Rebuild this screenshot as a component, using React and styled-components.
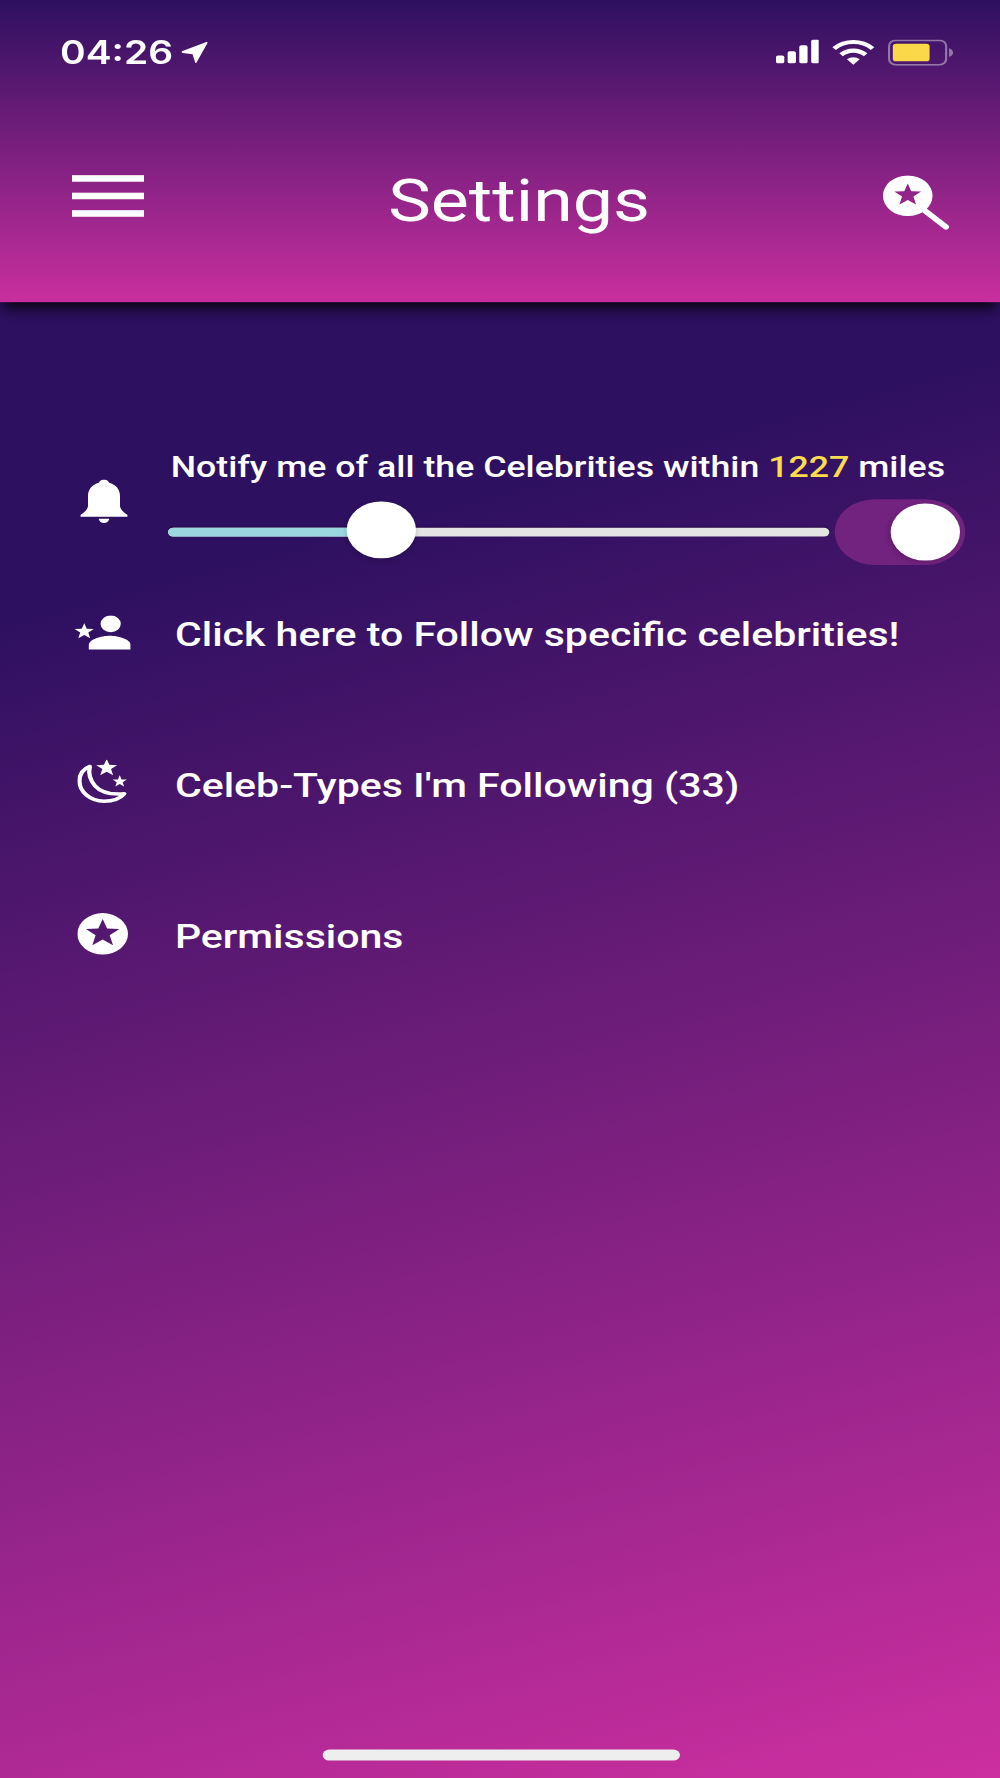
import React from "react";
import styled, { createGlobalStyle } from "styled-components";

const Global = createGlobalStyle`
  html, body { margin: 0; padding: 0; width: 1000px; height: 1778px; overflow: hidden; background: #2d1060; }
  #root { width: 1000px; height: 1778px; overflow: hidden; }
`;

/* The app is a 375x812 layout, stretched non-uniformly to the 1000x1778 picture. */
const Stage = styled.div`
  width: 375px;
  height: 812px;
  transform: scale(2.66667, 2.18966);
  transform-origin: 0 0;
  display: flex;
  flex-direction: column;
  font-family: Roboto, "Liberation Sans", sans-serif;
  color: #fff;
  background: linear-gradient(162deg, #2d1060 30%, #cd2fa0 100%);
  filter: blur(0.2px);
`;

const Header = styled.header`
  height: 138px;
  flex: none;
  box-sizing: border-box;
  display: flex;
  flex-direction: column;
  background: linear-gradient(180deg, #2d1060 0%, #c92f9e 100%);
  box-shadow: 0 3px 6px -1px rgba(0, 0, 0, 0.95);
  position: relative;
  z-index: 1;
`;

const StatusBar = styled.div`
  height: 44px;
  flex: none;
  box-sizing: border-box;
  padding: 16.5px 17.5px 0 22.5px;
  display: flex;
  align-items: flex-start;
  justify-content: space-between;
`;

const Clock = styled.div`
  display: flex;
  align-items: center;
  gap: 3.5px;
  font-family: Inter, "Liberation Sans", sans-serif;
  font-size: 14.6px;
  font-weight: 600;
  line-height: 15px;
  letter-spacing: 0;
`;

const StatusIcons = styled.div`
  display: flex;
  align-items: center;
  gap: 5px;
  padding-top: 1px;
`;

const NavBar = styled.div`
  flex: 1;
  display: flex;
  align-items: flex-start;
  padding: 36px 19px 0 26.8px;
  position: relative;
`;

const Burger = styled.div`
  width: 27.2px;
  height: 18.5px;
  display: flex;
  flex-direction: column;
  justify-content: space-between;
`;

const BurgerLine = styled.span`
  display: block;
  height: 3px;
  background: #fff;
`;

const Title = styled.h1`
  margin: -4.5px 0 0 91.6px;
  font-size: 26.9px;
  line-height: 33px;
  font-weight: 400;
  flex: 1;
  letter-spacing: 0;
`;

const Main = styled.main`
  flex: 1;
  padding-top: 68.2px;
  display: flex;
  flex-direction: column;
`;

const NotifyRow = styled.section`
  display: flex;
  align-items: center;
  padding-left: 27px;
  margin-bottom: 6px;
`;

const IconCell = styled.div`
  width: 24px;
  flex: none;
  display: flex;
  justify-content: center;
  align-items: center;
  margin-bottom: ${(p) => p.$lift || 0}px;
`;

const NotifyBody = styled.div`
  margin-left: 12px;
  display: flex;
  flex-direction: column;
  gap: 6px;
`;

const NotifyLabel = styled.div`
  padding-left: 1px;
  font-size: 13.4px;
  line-height: 16px;
  font-weight: 500;
  white-space: nowrap;
`;

const Miles = styled.span`
  color: #fbdc4c;
`;

const Controls = styled.div`
  display: flex;
  align-items: center;
  gap: 2.8px;
`;

const Slider = styled.div`
  position: relative;
  width: 247.5px;
  height: 4px;
  border-radius: 2px;
  background: #e4e4e4;
  box-shadow: 0 -0.5px 0.5px rgba(30, 0, 60, 0.5);
`;

const SliderFill = styled.div`
  height: 100%;
  border-radius: 2px 0 0 2px;
  background: #9cd6df;
`;

const SliderThumb = styled.div`
  position: absolute;
  top: calc(50% - 1.2px);
  width: 26px;
  height: 26px;
  border-radius: 50%;
  background: #fff;
  transform: translate(-50%, -50%);
  box-shadow: 0 1px 2px rgba(0, 0, 0, 0.18);
`;

const Switch = styled.div`
  width: 49px;
  height: 30px;
  box-sizing: border-box;
  padding: 2px;
  border-radius: 15px;
  background: #72227f;
  display: flex;
  justify-content: flex-end;
`;

const SwitchThumb = styled.div`
  width: 26px;
  height: 26px;
  border-radius: 50%;
  background: #fff;
  box-shadow: -1px 1px 2px rgba(0, 0, 0, 0.15);
`;

const Rows = styled.div`
  display: flex;
  flex-direction: column;
  gap: 18.7px;
`;

const Row = styled.div`
  height: 50px;
  display: flex;
  align-items: center;
  gap: 15.2px;
  padding-left: 26.4px;
`;

const RowText = styled.span`
  padding-top: 2px;
  font-size: 15.4px;
  line-height: 20px;
  font-weight: 500;
  white-space: nowrap;
`;

const HomeBar = styled.div`
  flex: none;
  padding-bottom: 7.7px;
  display: flex;
  justify-content: center;
`;

const HomeIndicator = styled.div`
  width: 134px;
  height: 5px;
  border-radius: 3px;
  background: #eeeeee;
`;

const star = (cx, cy, r, inner = 0.42) => {
  let d = "";
  for (let i = 0; i < 10; i++) {
    const rad = i % 2 ? r * inner : r;
    const a = -Math.PI / 2 + (i * Math.PI) / 5;
    d += `${i ? "L" : "M"}${(cx + rad * Math.cos(a)).toFixed(2)} ${(cy + rad * Math.sin(a)).toFixed(2)}`;
  }
  return d + "Z";
};

const circle = (cx, cy, r) =>
  `M${cx - r} ${cy}A${r} ${r} 0 1 1 ${cx + r} ${cy}A${r} ${r} 0 1 1 ${cx - r} ${cy}Z`;

const Arrow = () => (
  <svg width="10" height="10" viewBox="0 0 10 10">
    <path d="M.2 4.4 9.4.2c.3-.1.5.1.4.4L5.7 9.6c-.1.3-.5.2-.5-.1L4.2 5.8.5 5.2C.1 5.1 0 4.6.2 4.4Z" fill="#fff" />
  </svg>
);

const Signal = () => (
  <svg width="16.5" height="11" viewBox="0 0 17 11" preserveAspectRatio="none" fill="#fff">
    <rect x="0" y="7.4" width="3.2" height="3.6" rx=".8" />
    <rect x="4.5" y="5.4" width="3.2" height="5.6" rx=".8" />
    <rect x="9" y="2.7" width="3.2" height="8.3" rx=".8" />
    <rect x="13.6" y="0" width="3.2" height="11" rx=".8" />
  </svg>
);

const Wifi = () => (
  <svg width="16" height="12" viewBox="0 0 16 12" fill="none" stroke="#fff" strokeWidth="1.9">
    <path d="M.8 4.2C4.8.2 11.2.2 15.2 4.2" />
    <path d="M3.4 7C6 4.5 10 4.5 12.6 7" />
    <path d="M5.6 9.1 8 11.6l2.4-2.5C9 7.8 7 7.8 5.6 9.1Z" fill="#fff" stroke="none" />
  </svg>
);

const Battery = () => (
  <svg width="24.5" height="12" viewBox="0 0 24.5 12">
    <rect x=".4" y=".4" width="21.4" height="11.2" rx="2.6" fill="none" stroke="#fff" strokeOpacity=".42" strokeWidth=".8" />
    <rect x="1.8" y="2" width="13.8" height="8" rx="1.2" fill="#fbd84a" />
    <path d="M22.9 4v4c.9-.3 1.5-1.1 1.5-2s-.6-1.7-1.5-2Z" fill="#fff" fillOpacity=".42" />
  </svg>
);

const SearchStar = () => (
  <svg width="25" height="25" viewBox="0 0 25 25">
    <path d={circle(9.4, 9.4, 9.3) + star(9.4, 9.1, 5.3)} fill="#fff" fillRule="evenodd" />
    <path d="M15.8 16.2 23.7 23.6" stroke="#fff" strokeWidth="2.4" strokeLinecap="round" fill="none" />
  </svg>
);

const Bell = () => (
  <svg width="18" height="20" viewBox="0 0 18 20" fill="#fff">
    <path d="M9 0c1 0 1.7.6 1.9 1.5C13.5 2.3 15 4.6 15 7.5V12c0 1.3.8 2.4 2.8 4.2V17H.2v-.8C2.2 14.4 3 13.3 3 12V7.5C3 4.6 4.5 2.3 7.1 1.5 7.3.6 8 0 9 0Z" />
    <path d="M7 17.9h4c-.2 1.2-1 2-2 2s-1.8-.8-2-2Z" />
  </svg>
);

const PersonStar = () => (
  <svg width="21" height="16" viewBox="0 0 21 16" fill="#fff">
    <circle cx="13.5" cy="3.9" r="3.8" />
    <path d="M5.3 15.6V13.6C5.3 10.9 10 9.3 13.2 9.3S21 10.9 21 13.6V15.6Z" />
    <path d={star(3.6, 7.4, 3.8)} />
  </svg>
);

const MoonStars = () => (
  <svg width="18.5" height="20" viewBox="0 0 18.5 20" fill="#fff">
    <path
      d="M4.7 3C1.9 4.3.8 7 .8 9.7.8 14.5 4.7 18.9 10 18.9c3.4 0 6-1.1 7.6-3.4-5.2.5-8.8-.6-11-3.7C4.8 9.3 4.1 6.2 4.7 3Z"
      fill="none"
      stroke="#fff"
      strokeWidth="1.6"
      strokeLinejoin="round"
    />
    <path d={star(11, 3.7, 4.1)} />
    <path d={star(15.9, 9.9, 2.8)} />
  </svg>
);

const StarBadge = () => (
  <svg width="19" height="19" viewBox="0 0 19 19">
    <path d={circle(9.5, 9.5, 9.5) + star(9.5, 9.3, 6.6)} fill="#fff" fillRule="evenodd" />
  </svg>
);

const rows = [
  { icon: <PersonStar />, lift: 1.3, text: "Click here to Follow specific celebrities!" },
  { icon: <MoonStars />, lift: 1.3, text: "Celeb-Types I'm Following (33)" },
  { icon: <StarBadge />, lift: 0, text: "Permissions" },
];

export default function App() {
  const sliderValue = 32.4;
  return (
    <>
      <Global />
      <Stage>
        <Header>
          <StatusBar>
            <Clock>
              04:26
              <Arrow />
            </Clock>
            <StatusIcons>
              <Signal />
              <Wifi />
              <Battery />
            </StatusIcons>
          </StatusBar>
          <NavBar>
            <Burger>
              <BurgerLine />
              <BurgerLine />
              <BurgerLine />
            </Burger>
            <Title>Settings</Title>
            <SearchStar />
          </NavBar>
        </Header>
        <Main>
          <NotifyRow>
            <IconCell $lift={6}>
              <Bell />
            </IconCell>
            <NotifyBody>
              <NotifyLabel>
                Notify me of all the Celebrities within <Miles>1227</Miles> miles
              </NotifyLabel>
              <Controls>
                <Slider>
                  <SliderFill style={{ width: `${sliderValue}%` }} />
                  <SliderThumb style={{ left: `${sliderValue}%` }} />
                </Slider>
                <Switch>
                  <SwitchThumb />
                </Switch>
              </Controls>
            </NotifyBody>
          </NotifyRow>
          <Rows>
            {rows.map((r) => (
              <Row key={r.text}>
                <IconCell $lift={r.lift}>{r.icon}</IconCell>
                <RowText>{r.text}</RowText>
              </Row>
            ))}
          </Rows>
        </Main>
        <HomeBar>
          <HomeIndicator />
        </HomeBar>
      </Stage>
    </>
  );
}
